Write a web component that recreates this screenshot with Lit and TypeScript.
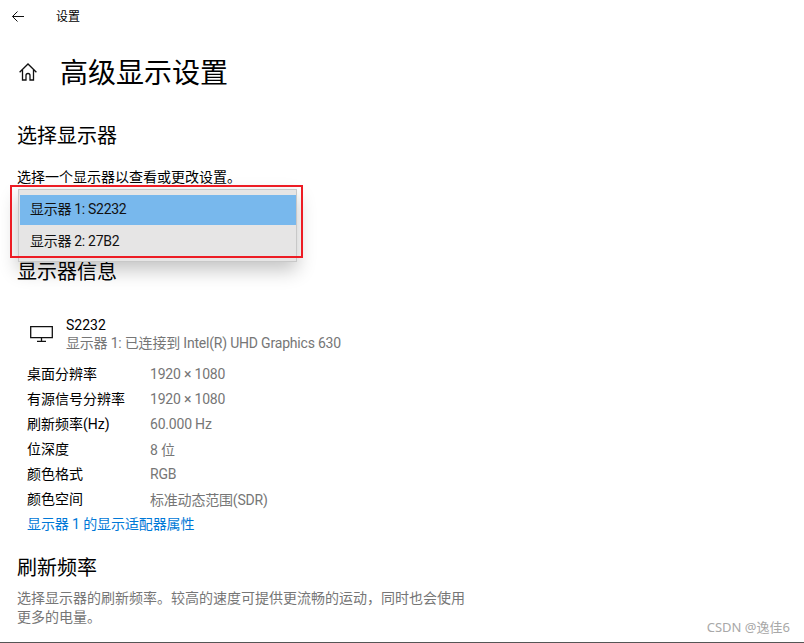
import { LitElement, html, css } from "lit";
import { customElement } from "lit/decorators.js";

const rows: [string, string][] = [
  ["桌面分辨率", "1920 × 1080"],
  ["有源信号分辨率", "1920 × 1080"],
  ["刷新频率(Hz)", "60.000 Hz"],
  ["位深度", "8 位"],
  ["颜色格式", "RGB"],
  ["颜色空间", "标准动态范围(SDR)"],
];

@customElement("app-root")
export class AppRoot extends LitElement {
  static styles = css`
    :host {
      display: block;
      position: relative;
      width: 804px;
      height: 643px;
      overflow: hidden;
      background: #fff;
      color: #000;
      font-family: Roboto, "Noto Sans CJK SC", sans-serif;
      font-size: 14px;
    }
    .topbar {
      display: flex;
      align-items: center;
      height: 33px;
      padding-left: 11px;
    }
    .topbar svg { display: block; }
    .topbar span { margin-left: 31px; font-size: 12px; line-height: 16px; }
    .titlerow {
      display: flex;
      align-items: center;
      height: 44px;
      margin-top: 19px;
      padding-left: 19px;
    }
    .titlerow svg { display: block; margin-bottom: 4px; }
    h1 {
      margin: 0 0 0 23px;
      font-size: 28px;
      font-weight: 400;
      line-height: 44px;
    }
    main { padding-left: 17px; }
    h2 {
      margin: 0;
      font-size: 20px;
      font-weight: 400;
      line-height: 28px;
    }
    .select-head { margin-top: 26px; }
    .hint { margin-top: 17px; line-height: 20px; }
    .info-head { margin-top: 71px; }
    .device {
      display: flex;
      align-items: center;
      margin-top: 30px;
      padding-left: 13px;
    }
    .device svg { display: block; flex: none; }
    .device-text { margin-left: 13px; line-height: 18px; }
    .muted { color: #767676; letter-spacing: -0.2px; }
    .specs {
      display: grid;
      grid-template-columns: 123px auto;
      justify-content: start;
      grid-auto-rows: 25px;
      align-items: center;
      margin-top: 9px;
      padding-left: 10px;
    }
    .label { margin-bottom: 2px; }
    .link {
      display: block;
      margin-top: 1px;
      padding-left: 10px;
      line-height: 25px;
      letter-spacing: -0.1px;
      color: #0078d7;
      text-decoration: none;
    }
    .rate-head { margin-top: 17px; }
    .rate-text {
      width: 460px;
      margin: 7px 0 0;
      line-height: 19px;
      color: #767676;
    }
    .flyout {
      position: absolute;
      left: 18px;
      top: 189px;
      width: 279px;
      height: 73px;
      box-sizing: border-box;
      padding: 5px 0 0 1px;
      background: #e6e5e5;
      border: 1px solid #c8c8c8;
      box-shadow: 0 8px 18px rgba(0, 0, 0, 0.24);
    }
    .option {
      height: 31px;
      padding-left: 10px;
      line-height: 30px;
      letter-spacing: -0.3px;
      color: #111;
    }
    .option.on {
      background: #78b8ed;
      height: 30px;
      line-height: 28px;
      margin-bottom: 1px;
    }
    .red {
      position: absolute;
      left: 10px;
      top: 185px;
      width: 293px;
      height: 73px;
      box-sizing: border-box;
      border: 2px solid #ed1c24;
    }
    .watermark {
      position: absolute;
      right: 14px;
      top: 618px;
      font-family: "Noto Sans", "Noto Sans CJK SC", sans-serif;
      font-size: 13px;
      line-height: 18px;
      color: #a8a8a8;
    }
    .edge {
      position: absolute;
      left: 0;
      right: 0;
      bottom: 0;
      height: 1px;
      background: #555;
    }
  `;

  render() {
    return html`
      <div class="topbar">
        <svg width="14" height="12" viewBox="0 0 14 12" fill="none" stroke="#111" stroke-width="1">
          <path d="M13 5.500H1.500M6.500 .5l-5 5 5 5" />
        </svg>
        <span>设置</span>
      </div>
      <div class="titlerow">
        <svg width="18" height="18" viewBox="0 0 18 18" fill="none" stroke="#111" stroke-width="1.3">
          <path d="M.6 9.300L9 1l8.400 8.300M3.500 7v10h3.500v-4.500a2 2 0 0 1 4 0V17h3.500V7" />
        </svg>
        <h1>高级显示设置</h1>
      </div>
      <main>
        <h2 class="select-head">选择显示器</h2>
        <div class="hint">选择一个显示器以查看或更改设置。</div>
        <h2 class="info-head">显示器信息</h2>
        <div class="device">
          <svg width="23" height="16" viewBox="0 0 23 16" fill="none" stroke="#111" stroke-width="1.3">
            <path d="M.7 .7h21.600v11H.7zM11.500 11.700v3M7 15.300h9" />
          </svg>
          <div class="device-text">
            <div>S2232</div>
            <div class="muted">显示器 1: 已连接到 Intel(R) UHD Graphics 630</div>
          </div>
        </div>
        <div class="specs">
          ${rows.map(([k, v]) => html`<div class="label">${k}</div><div class="muted">${v}</div>`)}
        </div>
        <a class="link" href="#">显示器 1 的显示适配器属性</a>
        <h2 class="rate-head">刷新频率</h2>
        <p class="rate-text">选择显示器的刷新频率。较高的速度可提供更流畅的运动，同时也会使用更多的电量。</p>
      </main>
      <div class="flyout">
        <div class="option on">显示器 1: S2232</div>
        <div class="option">显示器 2: 27B2</div>
      </div>
      <div class="red"></div>
      <div class="watermark">CSDN @逸佳6</div>
      <div class="edge"></div>
    `;
  }
}
